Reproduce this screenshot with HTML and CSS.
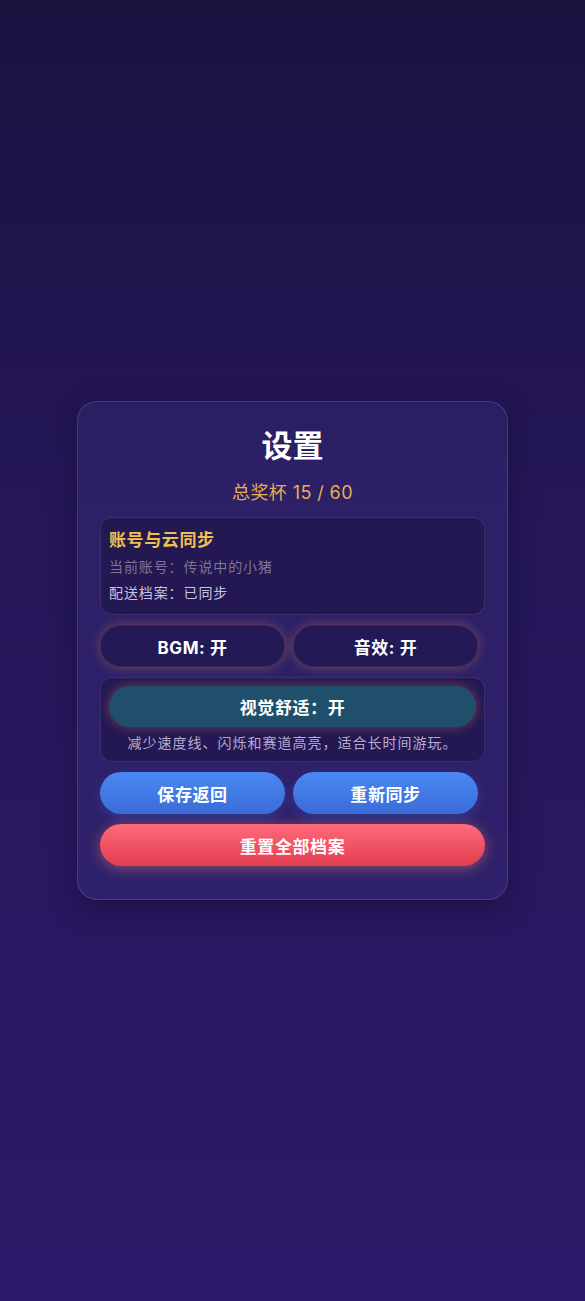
FILE: index.html
```html
<!DOCTYPE html>
<html lang="zh-CN">
<head>
    <meta charset="UTF-8">
    <meta name="viewport" content="width=device-width, initial-scale=1.0">
    <title>设置</title>
    <link rel="stylesheet" href="styles.css">
</head>
<body>

    <div class="panel">
        <h1 class="title">设置</h1>
        <div class="trophies">总奖杯 15 / 60</div>

        <div class="box account">
            <h2>账号与云同步</h2>
            <p class="dim">当前账号：传说中的小猪</p>
            <p>配送档案：已同步</p>
        </div>

        <div class="row">
            <button class="btn toggle">BGM: 开</button>
            <button class="btn toggle">音效: 开</button>
        </div>

        <div class="box comfort">
            <button class="btn teal">视觉舒适：开</button>
            <p>减少速度线、闪烁和赛道高亮，适合长时间游玩。</p>
        </div>

        <div class="row">
            <button class="btn blue">保存返回</button>
            <button class="btn blue">重新同步</button>
        </div>

        <button class="btn red">重置全部档案</button>
    </div>

</body>
</html>
```

FILE: styles.css
```css
* {
    margin: 0;
    padding: 0;
    box-sizing: border-box;
}
html, body {
    width: 100%;
    height: 100%;
}
body {
    display: flex;
    justify-content: center;
    align-items: center;
    background: linear-gradient(180deg, #1b1240 0%, #251759 40%, #2b1a69 100%);
    font-family: Inter, "Noto Sans CJK SC", sans-serif;
    color: #fff;
}
.panel {
    width: 431px;
    padding: 22px 22px 33px;
    border-radius: 20px;
    background: rgba(60, 50, 130, 0.35);
    border: 1px solid rgba(150, 140, 220, 0.25);
    box-shadow: 0 10px 30px rgba(10, 5, 30, 0.35);
    display: flex;
    flex-direction: column;
    gap: 10px;
}
.title {
    font-size: 31px;
    font-weight: 700;
    text-align: center;
    line-height: 44px;
}
.trophies {
    color: #e3b04f;
    font-size: 18px;
    text-align: center;
    line-height: 26px;
    margin-top: 2px;
    letter-spacing: 0.4px;
}
.box {
    border-radius: 12px;
    background: rgba(20, 12, 50, 0.4);
    border: 1px solid rgba(150, 140, 220, 0.2);
}
.account {
    margin-top: 1px;
    padding: 10px 9px 8px 8px;
}
.account h2 {
    color: #f0c04e;
    font-size: 17px;
    font-weight: 700;
    line-height: 24px;
    margin-bottom: 2px;
    letter-spacing: 0.6px;
}
.account p {
    font-size: 14px;
    line-height: 26px;
    color: #c8c2e0;
    letter-spacing: 0.9px;
}
.account p.dim {
    color: #7d7699;
}
.row {
    display: grid;
    grid-template-columns: 185px 185px;
    gap: 8px;
}
.btn {
    height: 42px;
    border: none;
    border-radius: 21px;
    font-family: inherit;
    font-size: 17px;
    font-weight: 700;
    color: #fff;
    letter-spacing: 0.6px;
    cursor: pointer;
}
.toggle {
    background: #231a55;
    box-shadow: 0 0 12px rgba(245, 145, 75, 0.38), inset 0 0 0 1px rgba(255, 160, 100, 0.1);
}
.comfort {
    padding: 8px;
    text-align: center;
}
.teal {
    width: 100%;
    height: 41px;
    background: #1f4f6b;
    box-shadow: 0 0 12px rgba(245, 135, 75, 0.38);
}
.comfort p {
    font-size: 14px;
    line-height: 20px;
    color: #b4adce;
    margin-top: 6px;
    letter-spacing: 1px;
}
.blue {
    background: linear-gradient(180deg, #4a88f2 0%, #3a6cd8 100%);
    box-shadow: 0 4px 12px rgba(60, 110, 230, 0.3);
}
.red {
    width: 100%;
    background: linear-gradient(180deg, #ff6a7a 0%, #e23e50 100%);
    box-shadow: 0 2px 14px rgba(255, 145, 95, 0.45);
}
```
